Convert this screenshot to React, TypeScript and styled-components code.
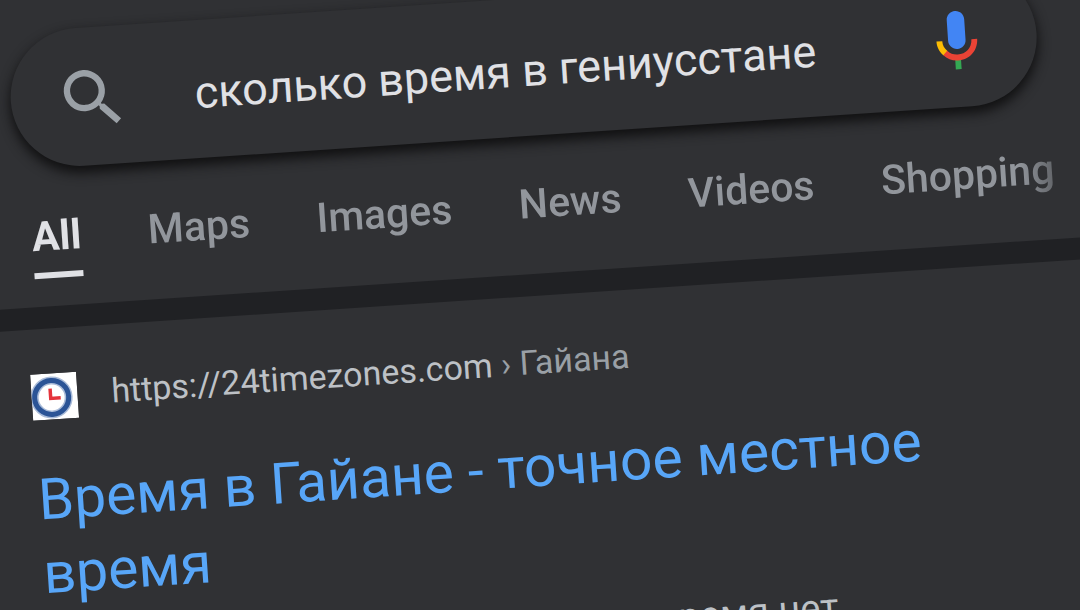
import React from "react";
import styled, { createGlobalStyle } from "styled-components";

const GlobalStyle = createGlobalStyle`
  * { box-sizing: border-box; }
  html, body { margin: 0; height: 100%; overflow: hidden; background: #303134; }
  #root { height: 100%; }
`;

const Viewport = styled.div`
  height: 100%;
  overflow: hidden;
  background: #303134;
  font-family: Roboto, "Open Sans", sans-serif;
`;

const Tilted = styled.div`
  width: 100%;
  transform: rotate(-3.83deg);
  transform-origin: 0 0;
`;

const Header = styled.header`
  padding: 33px 48px 0 4px;
`;

const SearchBar = styled.form`
  display: flex;
  align-items: center;
  height: 138px;
  padding: 4px 45px 0 44px;
  border-radius: 69px;
  background: #303134;
  box-shadow: 0 6px 12px 1px #111112;
`;

const SearchInput = styled.input`
  flex: 1;
  min-width: 0;
  height: 64px;
  margin-left: 64px;
  padding: 2px 0 0;
  border: 0;
  outline: 0;
  background: transparent;
  color: #e0e1e5;
  font: 400 45px/60px Roboto, sans-serif;
`;

const IconButton = styled.button`
  display: flex;
  flex: none;
  padding: 0;
  border: 0;
  background: none;
  color: #9aa0a6;
`;

const Tabs = styled.nav`
  display: flex;
  gap: 67px;
  padding: 38px 0 28px 16px;
  mask-image: linear-gradient(to right, #000 93%, transparent);
`;

const Tab = styled.a<{ $active?: boolean }>`
  flex: none;
  height: 72px;
  border-bottom: 6px solid ${(p) => (p.$active ? "#e0e1e5" : "transparent")};
  color: ${(p) => (p.$active ? "#e0e1e5" : "#92969c")};
  font-size: 41px;
  font-weight: ${(p) => (p.$active ? 700 : 500)};
  line-height: 60px;
  text-decoration: none;
`;

const Divider = styled.div`
  height: 22px;
  margin: 0 -40px;
  background: #202124;
`;

const Result = styled.article`
  padding: 44px 48px 0 5px;
`;

const Source = styled.a`
  display: flex;
  align-items: center;
  gap: 34px;
  height: 48px;
  color: #bdc1c6;
  font-size: 34px;
  line-height: 44px;
  text-decoration: none;
`;

const Address = styled.span`
  padding-bottom: 4px;
`;

const Crumb = styled.span`
  color: #9aa0a6;
`;

const Title = styled.h3`
  max-width: 960px;
  margin: 42px 0 0;
  font-size: 57px;
  font-weight: 400;
  line-height: 74px;
`;

const TitleLink = styled.a`
  color: #58a6f8;
  text-decoration: none;
`;

const Snippet = styled.p`
  margin: 20px 0 0;
  padding-right: 236px;
  color: #bdc1c6;
  font-size: 38px;
  line-height: 56px;
  text-align: right;
`;

const tabs = ["All", "Maps", "Images", "News", "Videos", "Shopping"];

const SearchIcon = () => (
  <svg width="76" height="76" viewBox="0 0 24 24" fill="currentColor" aria-hidden="true">
    <path d="M15.5 14h-.79l-.28-.27A6.47 6.47 0 0 0 16 9.5 6.5 6.5 0 1 0 9.5 16c1.61 0 3.09-.59 4.23-1.57l.27.28v.79l5 4.99L20.49 19l-4.99-5zm-6 0a4.5 4.5 0 1 1 0-9 4.5 4.5 0 0 1 0 9z" />
  </svg>
);

const MicIcon = () => (
  <svg width="70" height="70" viewBox="0 0 24 24" aria-hidden="true">
    <path fill="#4285f4" d="M12 15c1.66 0 3-1.31 3-2.97V5.01C15 3.35 13.66 2 12 2S9 3.34 9 5.01v7.02C9 13.69 10.34 15 12 15z" />
    <path fill="#34a853" d="M11 18.08h2V22h-2z" />
    <path fill="#fbbc04" d="M7.05 16.87C5.78 15.54 5 14.04 5 12h2c0 1.45.56 2.42 1.47 3.38v.32l-1.15 1.18z" />
    <path fill="#ea4335" d="M12 16.93a4.97 5.25 0 0 1-3.54-1.55l-1.41 1.49C8.31 18.21 10.07 19 12 19c3.87 0 6.99-2.92 6.99-7H17c0 2.92-2.24 4.93-5 4.93z" />
  </svg>
);

const ClockFavicon = () => (
  <svg width="46" height="46" viewBox="0 0 46 46" aria-hidden="true">
    <rect width="46" height="46" fill="#fff" />
    <circle cx="20" cy="24" r="17" fill="none" stroke="#a9bbd8" strokeWidth="8" />
    <circle cx="20" cy="24" r="17" fill="none" stroke="#2b5496" strokeWidth="5" />
    <path d="M19 15v10h10" fill="none" stroke="#e5343c" strokeWidth="3.5" />
  </svg>
);

export default function App() {
  return (
    <Viewport>
      <GlobalStyle />
      <Tilted>
        <Header>
          <SearchBar onSubmit={(e) => e.preventDefault()}>
            <IconButton type="submit" aria-label="Search">
              <SearchIcon />
            </IconButton>
            <SearchInput aria-label="Search query" defaultValue="сколько время в гениусстане" />
            <IconButton type="button" aria-label="Search by voice">
              <MicIcon />
            </IconButton>
          </SearchBar>
        </Header>
        <Tabs>
          {tabs.map((name, i) => (
            <Tab key={name} href="#" $active={i === 0}>
              {name}
            </Tab>
          ))}
        </Tabs>
        <Divider />
        <Result>
          <Source href="#">
            <ClockFavicon />
            <Address>
              https://24timezones.com <Crumb>› Гайана</Crumb>
            </Address>
          </Source>
          <Title>
            <TitleLink href="#">Время в Гайане - точное местное время</TitleLink>
          </Title>
          <Snippet>время нет</Snippet>
        </Result>
      </Tilted>
    </Viewport>
  );
}
